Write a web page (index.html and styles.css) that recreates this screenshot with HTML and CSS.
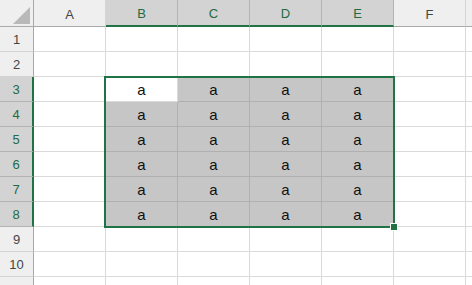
FILE: index.html
```html
<!DOCTYPE html>
<html lang="en">
<head>
    <meta charset="UTF-8">
    <title>Sheet</title>
    <link rel="stylesheet" href="styles.css">
</head>
<body>
    <div class="sheet">
        <!-- Column headers -->
        <div class="corner"><svg width="17" height="17" viewBox="0 0 17 17"><polygon points="0,17 17,17 17,0" fill="#b9b9b9"/></svg></div>
        <div class="col-head">A</div>
        <div class="col-head sel">B</div>
        <div class="col-head sel">C</div>
        <div class="col-head sel">D</div>
        <div class="col-head sel">E</div>
        <div class="col-head">F</div>
        <div class="col-head"></div>

        <div class="row-head">1</div>
        <div class="cell"></div><div class="cell"></div><div class="cell"></div><div class="cell"></div><div class="cell"></div><div class="cell"></div><div class="cell"></div>

        <div class="row-head">2</div>
        <div class="cell"></div><div class="cell"></div><div class="cell"></div><div class="cell"></div><div class="cell"></div><div class="cell"></div><div class="cell"></div>

        <div class="row-head sel">3</div>
        <div class="cell"></div><div class="cell active">a</div><div class="cell sel">a</div><div class="cell sel">a</div><div class="cell sel">a</div><div class="cell"></div><div class="cell"></div>

        <div class="row-head sel">4</div>
        <div class="cell"></div><div class="cell sel">a</div><div class="cell sel">a</div><div class="cell sel">a</div><div class="cell sel">a</div><div class="cell"></div><div class="cell"></div>

        <div class="row-head sel">5</div>
        <div class="cell"></div><div class="cell sel">a</div><div class="cell sel">a</div><div class="cell sel">a</div><div class="cell sel">a</div><div class="cell"></div><div class="cell"></div>

        <div class="row-head sel">6</div>
        <div class="cell"></div><div class="cell sel">a</div><div class="cell sel">a</div><div class="cell sel">a</div><div class="cell sel">a</div><div class="cell"></div><div class="cell"></div>

        <div class="row-head sel">7</div>
        <div class="cell"></div><div class="cell sel">a</div><div class="cell sel">a</div><div class="cell sel">a</div><div class="cell sel">a</div><div class="cell"></div><div class="cell"></div>

        <div class="row-head sel">8</div>
        <div class="cell"></div><div class="cell sel">a</div><div class="cell sel">a</div><div class="cell sel">a</div><div class="cell sel">a</div><div class="cell"></div><div class="cell"></div>

        <div class="row-head">9</div>
        <div class="cell"></div><div class="cell"></div><div class="cell"></div><div class="cell"></div><div class="cell"></div><div class="cell"></div><div class="cell"></div>

        <div class="row-head">10</div>
        <div class="cell"></div><div class="cell"></div><div class="cell"></div><div class="cell"></div><div class="cell"></div><div class="cell"></div><div class="cell"></div>

        <div class="row-head"></div>
        <div class="cell"></div><div class="cell"></div><div class="cell"></div><div class="cell"></div><div class="cell"></div><div class="cell"></div><div class="cell"></div>

        <!-- Selection outline B3:E8 -->
        <div class="selection"><div class="fill-handle"></div></div>
    </div>
</body>
</html>
```

FILE: styles.css
```css
body {
    margin: 0;
    background: #fff;
    overflow: hidden;
    font-family: 'Liberation Sans', Arial, sans-serif;
}

.sheet {
    position: relative;
    width: 472px;
    height: 285px;
    overflow: hidden;
    display: grid;
    grid-template-columns: 34px repeat(7, 72px);
    grid-template-rows: 27px repeat(11, 25px);
}

.sheet > div {
    box-sizing: border-box;
}

.corner {
    background: #efefef;
    border-right: 1px solid #a9a9a9;
    border-bottom: 1px solid #a9a9a9;
    display: flex;
    align-items: flex-end;
    justify-content: flex-end;
    padding: 0 3px 2px 0;
}

.corner svg {
    display: block;
}

.col-head {
    background: #efefef;
    border-right: 1px solid #d4d4d4;
    border-bottom: 1px solid #a9a9a9;
    display: flex;
    align-items: center;
    justify-content: center;
    padding-top: 2px;
    font-size: 13px;
    color: #444;
}

.col-head.sel {
    background: #d3d3d3;
    border-right-color: #b3b3b3;
    border-bottom: 2px solid #217346;
    color: #1e6b44;
}

.row-head {
    background: #efefef;
    border-right: 1px solid #a9a9a9;
    border-bottom: 1px solid #d4d4d4;
    display: flex;
    align-items: center;
    justify-content: center;
    font-size: 13px;
    color: #444;
}

.row-head.sel {
    background: #d3d3d3;
    border-right: 2px solid #217346;
    border-bottom-color: #b3b3b3;
    color: #1e6b44;
}

.cell {
    border-right: 1px solid #dadada;
    border-bottom: 1px solid #dadada;
    display: flex;
    align-items: center;
    justify-content: center;
    font-size: 15px;
    color: #111;
}

.cell.sel {
    background: #c6c6c6;
    border-color: #b0b0b0;
}

.cell.active {
    background: #fff;
}

/* sits on top of the grid */
.selection {
    position: absolute;
    left: 104px;
    top: 76px;
    width: 291px;
    height: 152px;
    border: 2px solid #217346;
    box-sizing: border-box;
    pointer-events: none;
}

.fill-handle {
    position: absolute;
    right: -5px;
    bottom: -5px;
    width: 6px;
    height: 6px;
    background: #217346;
    border: 1px solid #fff;
}
```
